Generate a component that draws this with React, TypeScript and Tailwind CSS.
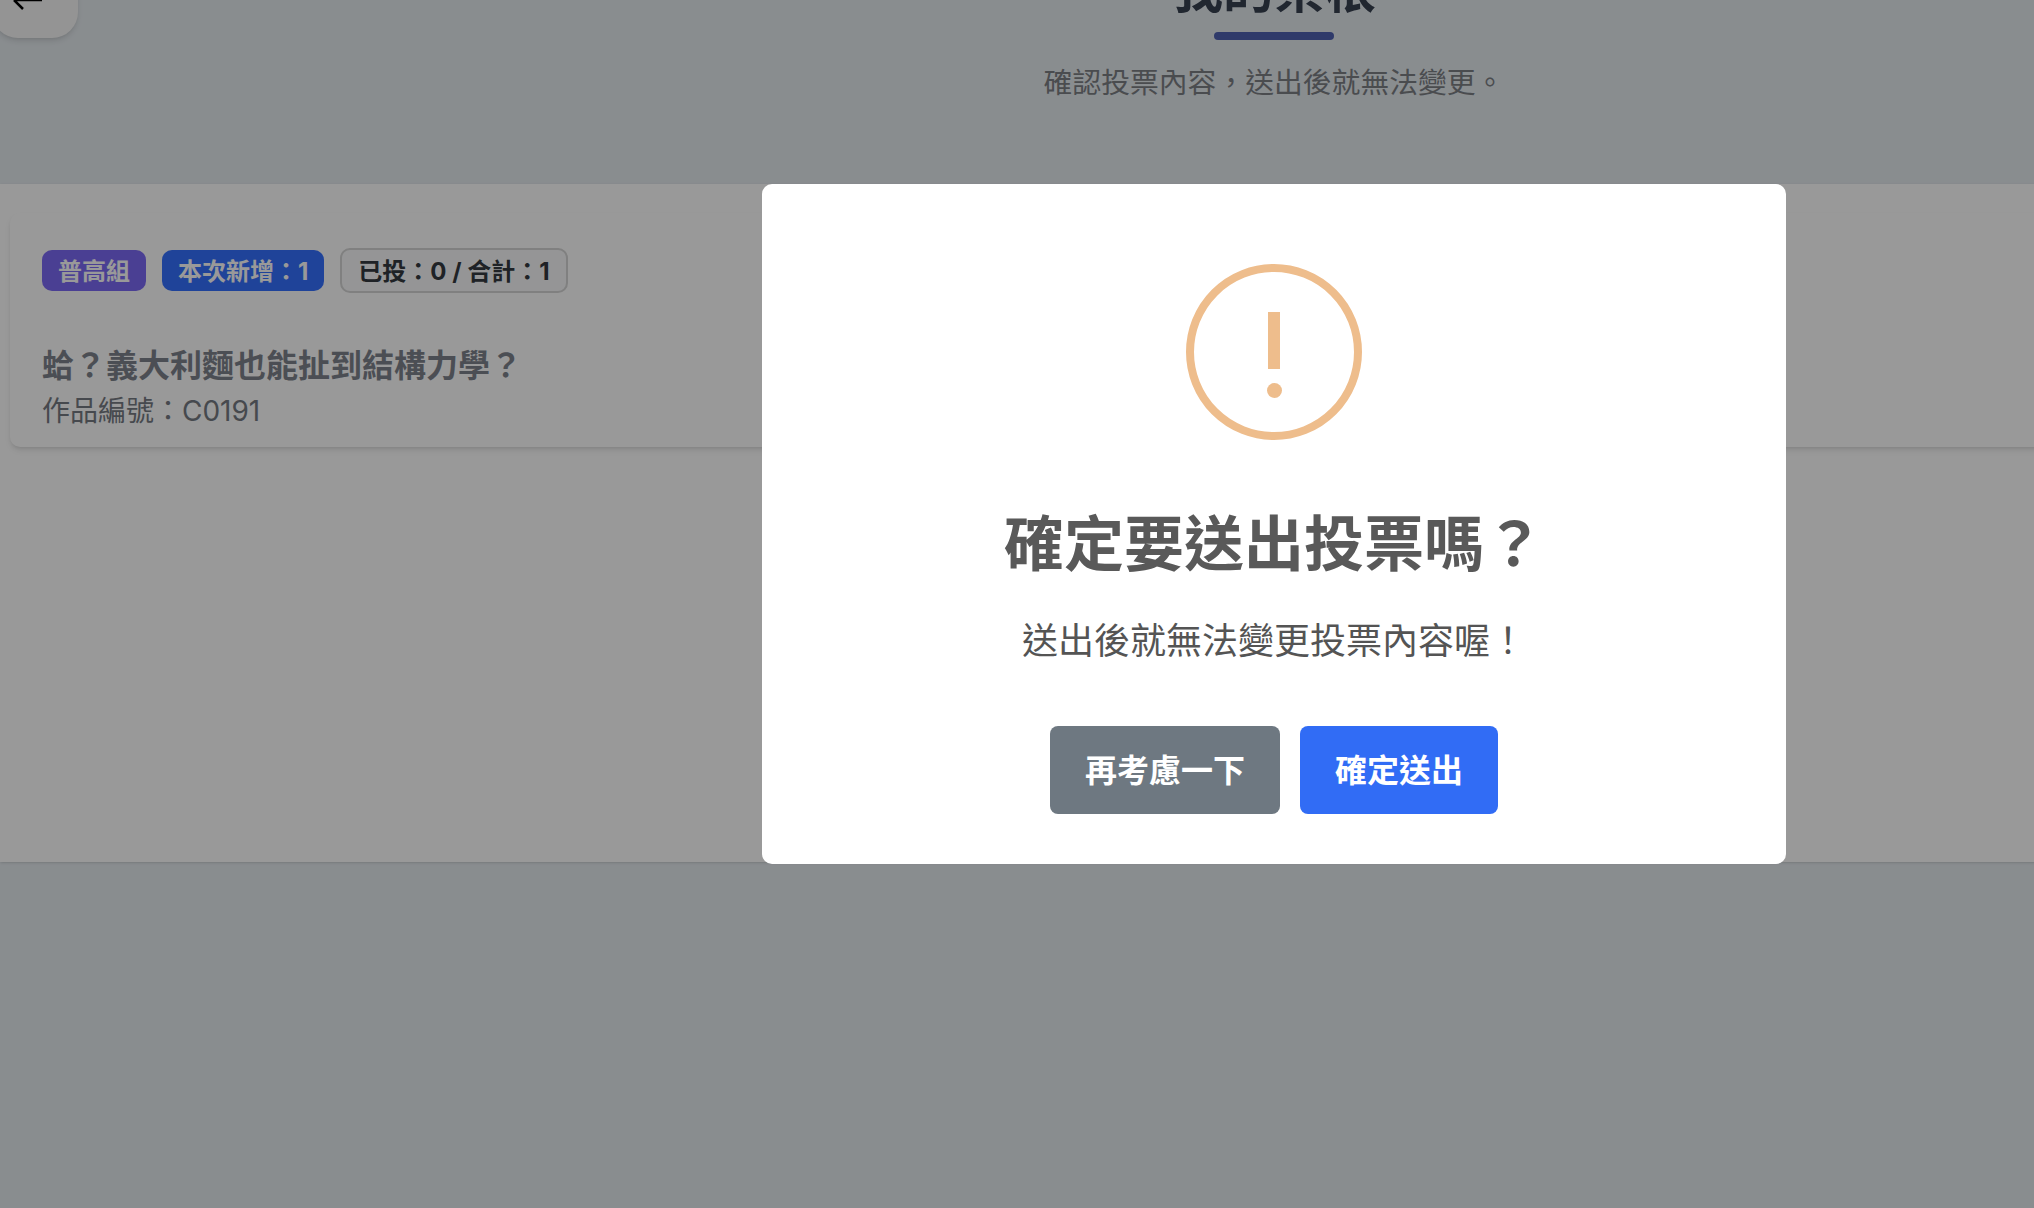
import React from "react";

const fontStack = "font-['Inter','Noto_Sans_CJK_TC',sans-serif]";

// full-width punctuation
const COMMA = "\uFF0C";
const COLON = "\uFF1A";
const QUESTION = "\uFF1F";
const BANG = "\uFF01";

const Badge = ({ label, className }: { label: string; className: string }) => (
  <span
    className={`flex items-center rounded-[10px] pt-[2px] font-bold text-[24px] leading-none ${className}`}
  >
    {label}
  </span>
);

const App = () => {
  return (
    <div
      className={`relative h-[1208px] w-[2034px] overflow-hidden bg-[#e5ebef] ${fontStack}`}
    >
      {/* page sits scrolled, header is cut off at the top */}
      <div className="relative -mt-[46px] w-[2548px]">
        <button className="absolute left-[-8px] top-[8px] flex h-[76px] w-[86px] items-center rounded-[26px] bg-[#f7f7f7] pl-[21px] shadow-md">
          <svg width="30" height="20" viewBox="0 0 30 20" fill="none" stroke="#000" strokeWidth="2.5">
            <path d="M1 10 H29 M1 10 L10 19 M1 10 L10 1" />
          </svg>
        </button>

        <div className="flex flex-col items-center">
          <h1 className="text-[51px] font-bold leading-[72px] text-[#374151]">我的票根</h1>
          <div className="mt-[6px] h-2 w-[120px] rounded-full bg-[#4f61b1]" />
          <p className="mt-[22px] text-[28.8px] leading-[42px] text-[#7c7f84]">
            {`確認投票內容${COMMA}送出後就無法變更。`}
          </p>
        </div>

        <section className="mt-[80px] h-[678px] bg-white pt-[29px] shadow-sm">
          <div className="ml-[10px] flex h-[234px] flex-col rounded-[10px] bg-white px-8 pt-[35px] shadow-md">
            <div className="flex items-center gap-4">
              <Badge label="普高組" className="h-[41px] bg-[#7c6af5] px-4 text-white" />
              <Badge label={`本次新增${COLON}1`} className="h-[41px] bg-[#3470ff] px-4 text-white" />
              <Badge
                label={`已投${COLON}0 / 合計${COLON}1`}
                className="h-[45px] border-2 border-[#d5d5d5] bg-[#f8f9fa] px-4 text-[#343a40]"
              />
            </div>
            <h2 className="mt-[49px] text-[32px] font-bold leading-[48px] text-[#7e838c]">
              {`蛤${QUESTION}義大利麵也能扯到結構力學${QUESTION}`}
            </h2>
            <p className="text-[28px] leading-[42px] text-[#757a82]">{`作品編號${COLON}C0191`}</p>
          </div>
        </section>
      </div>

      {/* confirm dialog */}
      <div className="absolute inset-0 bg-black/40 pl-[762px] pt-[184px]">
        <div className="flex h-[680px] w-[1024px] flex-col items-center rounded-[10px] bg-white pt-[80px]">
          <div className="flex h-[176px] w-[176px] flex-col items-center rounded-full border-[8px] border-[#eebd8c] pt-[40px]">
            <div className="h-[57px] w-3 bg-[#eebd8c]" />
            <div className="mt-[14px] h-[15px] w-[15px] rounded-full bg-[#eebd8c]" />
          </div>
          <h2 className="mt-[68px] text-[60px] font-bold leading-[72px] text-[#595959]">
            {`確定要送出投票嗎${QUESTION}`}
          </h2>
          <p className="mt-[34px] text-[36px] leading-[54px] text-[#545454]">
            {`送出後就無法變更投票內容喔${BANG}`}
          </p>
          <div className="mt-[58px] flex gap-5">
            <button className="h-[88px] w-[230px] rounded-lg bg-[#6e7881] pt-[2px] text-[32px] font-bold text-white">
              再考慮一下
            </button>
            <button className="h-[88px] w-[198px] rounded-lg bg-[#316cf5] pt-[2px] text-[32px] font-bold text-white">
              確定送出
            </button>
          </div>
        </div>
      </div>
    </div>
  );
};

export default App;
